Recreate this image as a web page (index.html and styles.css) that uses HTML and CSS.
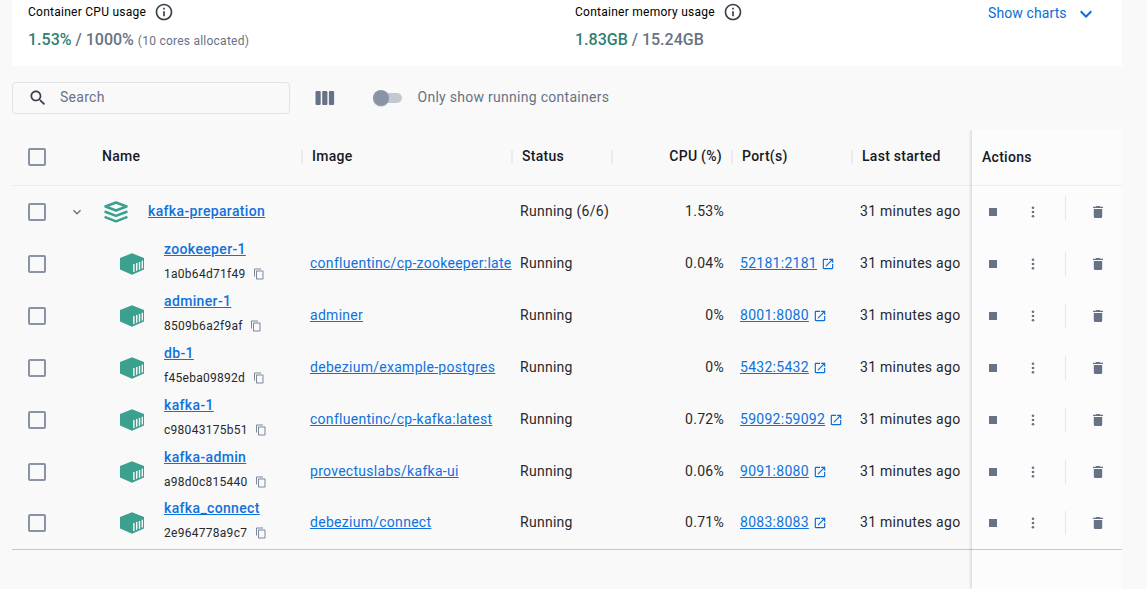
FILE: index.html
```html
<!DOCTYPE html>
<html lang="en">
<head>
<meta charset="utf-8">
<title>Containers</title>
<link rel="stylesheet" href="styles.css">
</head>
<body>
<svg class="sprite" aria-hidden="true">
  <symbol id="info" viewBox="0 0 24 24"><path d="M11 7h2v2h-2zm0 4h2v6h-2zm1-9C6.480 2 2 6.480 2 12s4.480 10 10 10 10-4.480 10-10S17.520 2 12 2zm0 18c-4.410 0-8-3.590-8-8s3.590-8 8-8 8 3.590 8 8-3.590 8-8 8z"/></symbol>
  <symbol id="chevron" viewBox="0 0 24 24"><path d="M7.410 8.590 12 13.170l4.590-4.580L18 10l-6 6-6-6z"/></symbol>
  <symbol id="search" viewBox="0 0 24 24"><path d="M15.500 14h-.79l-.28-.27C15.410 12.590 16 11.110 16 9.500 16 5.910 13.090 3 9.500 3S3 5.910 3 9.500 5.910 16 9.500 16c1.610 0 3.090-.59 4.230-1.570l.27.28v.79l5 4.990L20.490 19l-4.990-5zm-6 0C7.010 14 5 11.990 5 9.500S7.010 5 9.500 5 14 7.010 14 9.500 11.990 14 9.500 14z"/></symbol>
  <symbol id="columns" viewBox="0 0 20 14"><rect x="0.500" width="5.200" height="14" rx="1"/><rect x="7.200" width="5.200" height="14" rx="1"/><rect x="13.900" width="5.200" height="14" rx="1"/></symbol>
  <symbol id="stack" viewBox="0 0 24 22"><g fill="none" stroke="currentColor" stroke-width="2.500" stroke-linejoin="round"><path d="M1.500 5.500 12 1.500l10.500 4L12 9.500z"/><path d="M.6 10.500 12 14.900l11.400-4.400M.6 15.900 12 20.300l11.400-4.400"/></g></symbol>
  <symbol id="box" viewBox="0 0 24 22"><path d="M12 .2 24 5v11.600l-12 5.200-12-5.200V5z"/><path d="M13.900 11v8M16.700 10v7.800M19.500 8.900v7.800M22.300 7.800v7.700" stroke="#f9f9fa" stroke-width="1.400"/></symbol>
  <symbol id="copy" viewBox="0 0 24 24"><path d="M16 1H4c-1.100 0-2 .9-2 2v14h2V3h12V1zm3 4H8c-1.100 0-2 .9-2 2v14c0 1.100.9 2 2 2h11c1.100 0 2-.9 2-2V7c0-1.100-.9-2-2-2zm0 16H8V7h11v14z"/></symbol>
  <symbol id="open" viewBox="0 0 24 24"><path d="M19 19H5V5h7V3H5c-1.110 0-2 .9-2 2v14c0 1.100.89 2 2 2h14c1.100 0 2-.9 2-2v-7h-2v7zM14 3v2h3.590l-9.830 9.830 1.410 1.410L19 6.410V10h2V3h-7z"/></symbol>
  <symbol id="more" viewBox="0 0 4 12"><circle cx="2" cy="1.800" r="1.300"/><circle cx="2" cy="6" r="1.300"/><circle cx="2" cy="10.200" r="1.300"/></symbol>
  <symbol id="trash" viewBox="0 0 10 12"><path d="M.8 3h8.400v7.500A1.500 1.500 0 0 1 7.700 12H2.300A1.500 1.500 0 0 1 .8 10.500zM0 .8h2.500L3.300 0h3.400l.8.800H10v1.300H0z"/></symbol>
</svg>

<section class="usage">
  <div class="metric">
    <div class="metric-title">Container CPU usage <svg class="info"><use href="#info"/></svg></div>
    <div class="metric-value"><span class="used">1.53%</span> / 1000% <small>(10 cores allocated)</small></div>
  </div>
  <div class="metric">
    <div class="metric-title">Container memory usage <svg class="info"><use href="#info"/></svg></div>
    <div class="metric-value"><span class="used">1.83GB</span> / 15.24GB</div>
  </div>
  <div class="show-charts"><span>Show charts</span> <svg><use href="#chevron"/></svg></div>
</section>

<div class="toolbar">
  <div class="search"><svg><use href="#search"/></svg><span>Search</span></div>
  <svg class="columns"><use href="#columns"/></svg>
  <div class="switch"><i></i></div>
  <span class="switch-label">Only show running containers</span>
</div>

<main class="table">
  <div class="data">
    <div class="row head">
      <span class="check"></span><span class="name">Name</span><span class="sep">Image</span><span class="sep">Status</span><span class="sep num">CPU (%)</span><span class="sep">Port(s)</span><span class="sep">Last started</span>
    </div>
    <div class="row group">
      <span class="check"></span>
      <div class="name"><svg class="expand"><use href="#chevron"/></svg><svg class="kind"><use href="#stack"/></svg><a>kafka-preparation</a></div>
      <span></span><span>Running (6/6)</span><span class="num">1.53%</span><span></span><span>31 minutes ago</span>
    </div>
    <div class="row">
      <span class="check"></span>
      <div class="name"><svg class="kind"><use href="#box"/></svg><div><a>zookeeper-1</a><p>1a0b64d71f49<svg><use href="#copy"/></svg></p></div></div>
      <span><a>confluentinc/cp-zookeeper:late</a></span><span>Running</span><span class="num">0.04%</span><span class="port"><a>52181:2181</a><svg><use href="#open"/></svg></span><span>31 minutes ago</span>
    </div>
    <div class="row">
      <span class="check"></span>
      <div class="name"><svg class="kind"><use href="#box"/></svg><div><a>adminer-1</a><p>8509b6a2f9af<svg><use href="#copy"/></svg></p></div></div>
      <span><a>adminer</a></span><span>Running</span><span class="num">0%</span><span class="port"><a>8001:8080</a><svg><use href="#open"/></svg></span><span>31 minutes ago</span>
    </div>
    <div class="row">
      <span class="check"></span>
      <div class="name"><svg class="kind"><use href="#box"/></svg><div><a>db-1</a><p>f45eba09892d<svg><use href="#copy"/></svg></p></div></div>
      <span><a>debezium/example-postgres</a></span><span>Running</span><span class="num">0%</span><span class="port"><a>5432:5432</a><svg><use href="#open"/></svg></span><span>31 minutes ago</span>
    </div>
    <div class="row">
      <span class="check"></span>
      <div class="name"><svg class="kind"><use href="#box"/></svg><div><a>kafka-1</a><p>c98043175b51<svg><use href="#copy"/></svg></p></div></div>
      <span><a>confluentinc/cp-kafka:latest</a></span><span>Running</span><span class="num">0.72%</span><span class="port"><a>59092:59092</a><svg><use href="#open"/></svg></span><span>31 minutes ago</span>
    </div>
    <div class="row">
      <span class="check"></span>
      <div class="name"><svg class="kind"><use href="#box"/></svg><div><a>kafka-admin</a><p>a98d0c815440<svg><use href="#copy"/></svg></p></div></div>
      <span><a>provectuslabs/kafka-ui</a></span><span>Running</span><span class="num">0.06%</span><span class="port"><a>9091:8080</a><svg><use href="#open"/></svg></span><span>31 minutes ago</span>
    </div>
    <div class="row last">
      <span class="check"></span>
      <div class="name"><svg class="kind"><use href="#box"/></svg><div><a>kafka_connect</a><p>2e964778a9c7<svg><use href="#copy"/></svg></p></div></div>
      <span><a>debezium/connect</a></span><span>Running</span><span class="num">0.71%</span><span class="port"><a>8083:8083</a><svg><use href="#open"/></svg></span><span>31 minutes ago</span>
    </div>
  </div>
  <div class="pinned">
    <div class="actions head">Actions</div>
    <div class="actions group"><i class="stop"></i><svg class="more"><use href="#more"/></svg><i class="divider"></i><svg class="trash"><use href="#trash"/></svg></div>
    <div class="actions"><i class="stop"></i><svg class="more"><use href="#more"/></svg><i class="divider"></i><svg class="trash"><use href="#trash"/></svg></div>
    <div class="actions"><i class="stop"></i><svg class="more"><use href="#more"/></svg><i class="divider"></i><svg class="trash"><use href="#trash"/></svg></div>
    <div class="actions"><i class="stop"></i><svg class="more"><use href="#more"/></svg><i class="divider"></i><svg class="trash"><use href="#trash"/></svg></div>
    <div class="actions"><i class="stop"></i><svg class="more"><use href="#more"/></svg><i class="divider"></i><svg class="trash"><use href="#trash"/></svg></div>
    <div class="actions"><i class="stop"></i><svg class="more"><use href="#more"/></svg><i class="divider"></i><svg class="trash"><use href="#trash"/></svg></div>
    <div class="actions last"><i class="stop"></i><svg class="more"><use href="#more"/></svg><i class="divider"></i><svg class="trash"><use href="#trash"/></svg></div>
  </div>
</main>
</body>
</html>
```
FILE: styles.css
```css
* { box-sizing: border-box; }
body {
  margin: 0;
  height: 589px;
  padding: 0 25px 0 12px;
  display: flex;
  flex-direction: column;
  overflow: hidden;
  background: #f9f9fa;
  color: #27282c;
  font: 14px/20px Roboto, sans-serif;
  letter-spacing: .28px;
}
svg { fill: currentColor; flex: none; }
p { margin: 0; }
.sprite { display: none; }

.usage {
  height: 66px;
  flex: none;
  background: #fff;
  display: grid;
  grid-template-columns: 547px 413px 1fr;
  padding-left: 16px;
}
.metric-title {
  display: flex;
  align-items: center;
  gap: 8px;
  height: 24px;
  font-size: 12px;
  letter-spacing: .26px;
  color: #000;
}
.info { width: 20px; height: 20px; color: #393f49; }
.metric-value {
  margin-top: 6px;
  font-size: 16px;
  font-weight: 500;
  letter-spacing: 0;
  color: #677285;
}
.metric-value small { font-size: 12px; font-weight: 400; letter-spacing: .24px; }
.used { color: #2e7f74; }
.show-charts {
  display: flex;
  align-items: center;
  gap: 7px;
  height: 28px;
  color: #086dd7;
  letter-spacing: .1px;
}
.show-charts span { padding-bottom: 2px; }
.show-charts svg { width: 24px; height: 24px; }

.toolbar {
  height: 64px;
  flex: none;
  display: flex;
  align-items: center;
  color: #677285;
}
.toolbar span { padding-bottom: 2px; }
.search {
  width: 278px;
  height: 32px;
  border: 1px solid #e1e2e6;
  border-radius: 4px;
  display: flex;
  align-items: center;
  gap: 12px;
  padding-left: 15px;
}
.search svg { width: 20px; height: 20px; color: #393f49; }
.columns { width: 20px; height: 14px; margin-left: 25px; }
.switch {
  width: 27px;
  height: 10px;
  border-radius: 5px;
  background: #c4c8d1;
  margin: 0 15.500px 0 40px;
  display: flex;
  align-items: center;
}
.switch i {
  width: 16px;
  height: 16px;
  flex: none;
  margin-left: -2px;
  border-radius: 50%;
  background: #8993a5;
  box-shadow: 0 1px 1px #0002;
}

.table { display: flex; flex: 1; }
.data { width: 960px; }
.row {
  display: grid;
  grid-template-columns: 50px 240px 210px 100px 120px 120px 120px;
  align-items: center;
  height: 52px;
}
.row > * { padding-left: 8px; padding-bottom: 2px; white-space: nowrap; }
.row > .check {
  width: 18px;
  height: 18px;
  margin-left: 16px;
  padding: 0;
  border: 2px solid #8993a5;
  border-radius: 2px;
}
.row.head, .actions.head {
  height: 56px;
  padding-bottom: 1px;
  border-bottom: 1px solid #ebecee;
  font-weight: 500;
  color: #17191e;
}
.row.head .name { padding-left: 40px; }
.row.head .sep {
  height: 14px;
  line-height: 12px;
  margin-left: -1px;
  padding-left: 9px;
  border-left: 2px solid #ebecee;
}
.row > .num { text-align: right; padding-right: 8px; }
.row.head > .num { padding-right: 10px; }
a { color: #0f72dc; text-decoration: underline; }
.row > div.name {
  display: flex;
  align-items: center;
  padding: 0 0 0 58px;
}
.group > div.name { padding-left: 7px; }
.name a { display: block; font-weight: 500; letter-spacing: .35px; }
.name > div { padding-bottom: 6px; }
.group .name a { padding-bottom: 2px; }
.kind { width: 24px; height: 22px; color: #3ca08f; margin-right: 20px; }
.expand { width: 16px; height: 16px; color: #677285; margin-right: 19px; }
.name p {
  display: flex;
  align-items: center;
  gap: 7.500px;
  height: 20px;
  margin-top: 4px;
  padding-top: 2px;
  font-size: 12px;
}
.name p svg { width: 12px; height: 12px; color: #7d8799; }
.port { display: flex; align-items: center; gap: 4px; color: #086dd7; }
.port svg { width: 14px; height: 14px; margin-top: 2px; }
.row.last, .actions.last { padding-bottom: 1px; border-bottom: 1px solid #c4c8d1; }

.pinned {
  width: 150px;
  background: #fcfcfd;
  box-shadow: -1px 0 3px #0000002b;
  clip-path: inset(0 0 0 -4px);
}
.actions {
  height: 52px;
  display: flex;
  align-items: center;
  padding-left: 17px;
  color: #677285;
}
.actions.head { padding-left: 10px; }
.stop { width: 8px; height: 8px; background: currentColor; }
.more { width: 4px; height: 12px; margin-left: 34px; }
.divider { width: 1px; height: 24px; background: #e6e7ea; margin-left: 30px; }
.trash { width: 10px; height: 12px; margin-left: 27px; }
.actions.group .divider { margin-top: -8px; }
```
